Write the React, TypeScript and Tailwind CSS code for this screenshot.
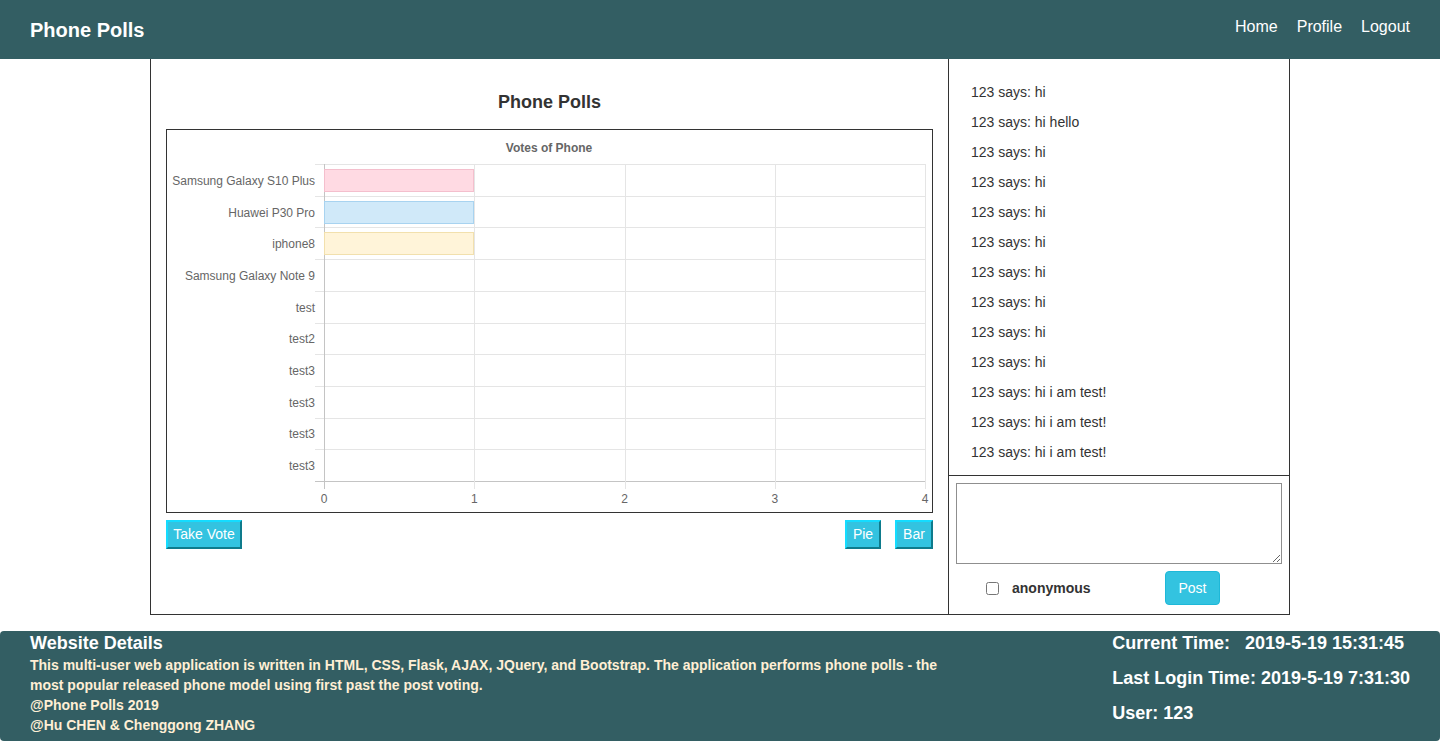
import React from "react";

const phones = [
  "Samsung Galaxy S10 Plus",
  "Huawei P30 Pro",
  "iphone8",
  "Samsung Galaxy Note 9",
  "test",
  "test2",
  "test3",
  "test3",
  "test3",
  "test3",
];

const votes = [1, 1, 1, 0, 0, 0, 0, 0, 0, 0];

const barColors = [
  { fill: "#ffdae3", stroke: "#f4bfcd" },
  { fill: "#d0e9f9", stroke: "#a8d3f0" },
  { fill: "#fff4d9", stroke: "#f2e0ad" },
];

const messages = [
  "123 says: hi",
  "123 says: hi hello",
  "123 says: hi",
  "123 says: hi",
  "123 says: hi",
  "123 says: hi",
  "123 says: hi",
  "123 says: hi",
  "123 says: hi",
  "123 says: hi",
  "123 says: hi i am test!",
  "123 says: hi i am test!",
  "123 says: hi i am test!",
];

// plot geometry inside the chart box (765 x 382)
const PX = 157;
const PY = 34;
const PW = 601;
const PH = 317;
const ROW = PH / phones.length;
const COL = PW / 4;

function VoteChart() {
  return (
    <svg width="765" height="382" className="block" shapeRendering="crispEdges">
      <text
        x="382"
        y="22"
        textAnchor="middle"
        fontSize="12"
        fontWeight="bold"
        fill="#666"
        fontFamily="'Liberation Sans', Arial, sans-serif"
      >
        Votes of Phone
      </text>

      {/* horizontal grid + ticks */}
      {Array.from({ length: phones.length + 1 }).map((_, i) => {
        const y = Math.round(PY + i * ROW) + 0.5;
        const last = i === phones.length;
        return (
          <line
            key={"h" + i}
            x1={PX - 9}
            x2={PX + PW}
            y1={y}
            y2={y}
            stroke={last ? "#c4c4c4" : "#e5e5e5"}
            strokeWidth="1"
          />
        );
      })}

      {/* vertical grid + ticks */}
      {Array.from({ length: 5 }).map((_, i) => {
        const x = Math.round(PX + i * COL) + 0.5;
        return (
          <line
            key={"v" + i}
            x1={x}
            x2={x}
            y1={PY}
            y2={PY + PH + 8}
            stroke={i === 0 ? "#c4c4c4" : "#e5e5e5"}
            strokeWidth="1"
          />
        );
      })}

      {/* bars */}
      {votes.map((v, i) => {
        if (!v) return null;
        const c = barColors[i % barColors.length];
        const cy = PY + (i + 0.5) * ROW;
        return (
          <rect
            key={"b" + i}
            x={PX + 0.5}
            y={Math.round(cy - 11) + 0.5}
            width={Math.round(v * COL) - 1}
            height="22"
            fill={c.fill}
            stroke={c.stroke}
            strokeWidth="1"
          />
        );
      })}

      {/* y labels */}
      {phones.map((p, i) => (
        <text
          key={"l" + i}
          x={PX - 9}
          y={PY + (i + 0.5) * ROW + 5}
          textAnchor="end"
          fontSize="12"
          fill="#666"
          fontFamily="'Liberation Sans', Arial, sans-serif"
        >
          {p}
        </text>
      ))}

      {/* x labels */}
      {[0, 1, 2, 3, 4].map((n) => (
        <text
          key={"x" + n}
          x={PX + n * COL}
          y={PY + PH + 22}
          textAnchor="middle"
          fontSize="12"
          fill="#666"
          fontFamily="'Liberation Sans', Arial, sans-serif"
        >
          {n}
        </text>
      ))}
    </svg>
  );
}

function ChartButton({ label, width }: { label: string; width: string }) {
  return (
    <button
      className={`${width} h-[29px] bg-[#33c3e0] text-white text-[14px] border-2 border-t-[#14dcff] border-l-[#14dcff] border-b-[#0e7b8c] border-r-[#0e7b8c]`}
    >
      {label}
    </button>
  );
}

export default function App() {
  return (
    <div className="min-h-screen bg-white font-['Liberation_Sans',Arial,sans-serif] text-[#333]">
      <header className="h-[59px] bg-[#335e63] flex items-center justify-between px-[30px]">
        <div className="text-white text-[20px] font-bold">Phone Polls</div>
        <nav className="flex gap-[19px] text-white text-[16px] mb-[6px]">
          <a>Home</a>
          <a>Profile</a>
          <a>Logout</a>
        </nav>
      </header>

      <main className="w-[1140px] mx-auto flex border-x border-b border-[#333]">
        <section className="flex-1 px-[15px] pt-[32px]">
          <h2 className="text-center text-[18px] font-bold leading-[22px]">
            Phone Polls
          </h2>
          <div className="mt-[16px] border border-[#333]">
            <VoteChart />
          </div>
          <div className="mt-[7px] flex items-center">
            <ChartButton label="Take Vote" width="w-[76px]" />
            <div className="ml-auto flex gap-[14px]">
              <ChartButton label="Pie" width="w-[36px]" />
              <ChartButton label="Bar" width="w-[38px]" />
            </div>
          </div>
        </section>

        <aside className="w-[341px] border-l border-[#333] flex flex-col">
          <ul className="h-[417px] pt-[18px] border-b border-[#333]">
            {messages.map((m, i) => (
              <li key={i} className="h-[30px] leading-[30px] pl-[22px] text-[14px] text-[#333]">
                {m}
              </li>
            ))}
          </ul>
          <div className="h-[138px] p-[7px]">
            <textarea className="block w-[326px] h-[81px] border border-[#8f8f8f] outline-none resize" />
            <div className="mt-[7px] flex items-center h-[34px]">
              <input type="checkbox" className="ml-[30px] w-[13px] h-[13px]" />
              <span className="ml-[13px] w-[153px] text-[14px] font-bold text-[#333]">anonymous</span>
              <button className="w-[55px] h-[34px] rounded-[4px] bg-[#33c3e0] border border-[#1eb8d8] text-white text-[14px]">
                Post
              </button>
            </div>
          </div>
        </aside>
      </main>

      <footer className="mt-[16px] h-[110px] bg-[#335e63] rounded-[4px] flex justify-between px-[30px] pt-[1px]">
        <div className="w-[920px]">
          <div className="text-white text-[18px] font-bold leading-[22px]">Website Details</div>
          <p className="mt-[1px] text-[#ffefd5] text-[14px] font-bold leading-[20px]">
            This multi-user web application is written in HTML, CSS, Flask, AJAX, JQuery, and
            Bootstrap. The application performs phone polls - the most popular released phone
            model using first past the post voting.
            <br />
            @Phone Polls 2019
            <br />
            @Hu CHEN &amp; Chenggong ZHANG
          </p>
        </div>
        <div className="flex flex-col gap-[13px] text-white text-[18px] font-bold leading-[22px]">
          <div>
            Current Time:<span className="ml-[15px]">2019-5-19 15:31:45</span>
          </div>
          <div>Last Login Time: 2019-5-19 7:31:30</div>
          <div>User: 123</div>
        </div>
      </footer>
    </div>
  );
}
